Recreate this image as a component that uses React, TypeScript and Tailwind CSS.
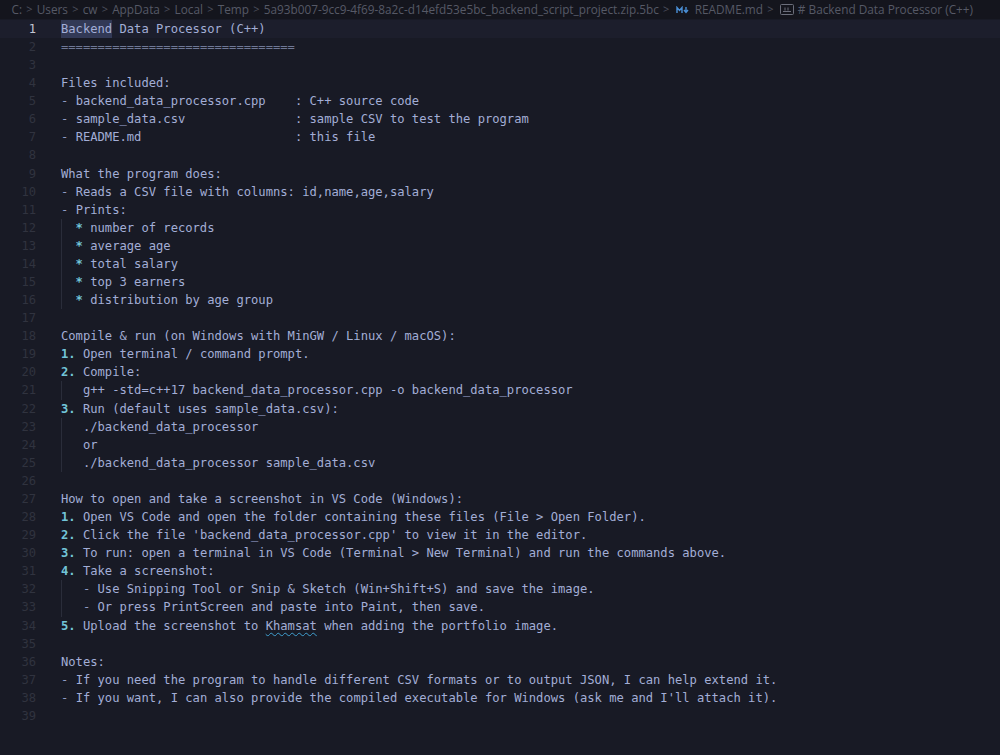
const BLUE = "text-[#a3aed6]";
const TEAL = "font-bold text-[#72c4d8]";
const DASH = "text-[#8f9bc4]";

type Seg = { t: string; c?: string };

const crumbs = ["C:", "Users", "cw", "AppData", "Local", "Temp", "5a93b007-9cc9-4f69-8a2c-d14efd53e5bc_backend_script_project.zip.5bc"];

function num(marker: string, text: string): Seg[] {
  return [{ t: marker, c: TEAL }, { t: " " + text }];
}
function dash(text: string): Seg[] {
  return [{ t: "- ", c: DASH }, { t: text }];
}
function star(text: string): Seg[] {
  return [{ t: "* ", c: TEAL }, { t: text }];
}

const lines: { segs?: Seg[]; guide?: number }[] = [
  { segs: [{ t: "Backend Data Processor (C++)" }] },
  { segs: [{ t: "================================", c: "text-[#6f7896]" }] },
  {},
  { segs: [{ t: "Files included:" }] },
  { segs: dash("backend_data_processor.cpp    : C++ source code") },
  { segs: dash("sample_data.csv               : sample CSV to test the program") },
  { segs: dash("README.md                     : this file") },
  {},
  { segs: [{ t: "What the program does:" }] },
  { segs: dash("Reads a CSV file with columns: id,name,age,salary") },
  { segs: dash("Prints:") },
  { guide: 2, segs: star("number of records") },
  { guide: 2, segs: star("average age") },
  { guide: 2, segs: star("total salary") },
  { guide: 2, segs: star("top 3 earners") },
  { guide: 2, segs: star("distribution by age group") },
  {},
  { segs: [{ t: "Compile & run (on Windows with MinGW / Linux / macOS):" }] },
  { segs: num("1.", "Open terminal / command prompt.") },
  { segs: num("2.", "Compile:") },
  { guide: 3, segs: [{ t: "g++ -std=c++17 backend_data_processor.cpp -o backend_data_processor" }] },
  { segs: num("3.", "Run (default uses sample_data.csv):") },
  { guide: 3, segs: [{ t: "./backend_data_processor" }] },
  { guide: 3, segs: [{ t: "or" }] },
  { guide: 3, segs: [{ t: "./backend_data_processor sample_data.csv" }] },
  {},
  { segs: [{ t: "How to open and take a screenshot in VS Code (Windows):" }] },
  { segs: num("1.", "Open VS Code and open the folder containing these files (File > Open Folder).") },
  { segs: num("2.", "Click the file 'backend_data_processor.cpp' to view it in the editor.") },
  { segs: num("3.", "To run: open a terminal in VS Code (Terminal > New Terminal) and run the commands above.") },
  { segs: num("4.", "Take a screenshot:") },
  { guide: 3, segs: dash("Use Snipping Tool or Snip & Sketch (Win+Shift+S) and save the image.") },
  { guide: 3, segs: dash("Or press PrintScreen and paste into Paint, then save.") },
  {
    segs: [
      { t: "5.", c: TEAL },
      { t: " Upload the screenshot to " },
      { t: "Khamsat", c: "underline decoration-wavy decoration-[#3f9fd0] decoration-1 underline-offset-2" },
      { t: " when adding the portfolio image." },
    ],
  },
  {},
  { segs: [{ t: "Notes:" }] },
  { segs: dash("If you need the program to handle different CSV formats or to output JSON, I can help extend it.") },
  { segs: dash("If you want, I can also provide the compiled executable for Windows (ask me and I'll attach it).") },
  {},
];

function Chevron() {
  return <span className="text-[11px] text-[#4d505e]">&gt;</span>;
}

function Breadcrumbs() {
  return (
    <div className="flex h-[19px] items-center gap-[4.2px] overflow-hidden bg-[#14151d] pl-[11.5px] font-['Open_Sans',sans-serif] text-[11.8px] whitespace-nowrap text-[#565966]">
      {crumbs.map((c) => (
        <span key={c} className="flex items-center gap-[4.2px]">
          <span>{c}</span>
          <Chevron />
        </span>
      ))}
      {/* markdown file icon */}
      <svg width="13" height="8" viewBox="0 0 13 8" className="mr-[2px] ml-[2px] text-[#4a8fd6]" fill="none" stroke="currentColor" strokeWidth="1.4">
        <path d="M1 7V1.5l2.5 3 2.5-3V7" />
        <path d="M10 1v4.5M8 4l2 2.5L12 4" />
      </svg>
      <span>README.md</span>
      <Chevron />
      <svg width="14" height="11" viewBox="0 0 14 11" fill="none" className="ml-[2px] text-[#6b6e7b]">
        <rect x="0.5" y="0.5" width="13" height="10" rx="1" stroke="currentColor" />
        <path d="M3 7.5h8M5 3.5v3M8 3.5v3" stroke="currentColor" />
      </svg>
      <span># Backend Data Processor (C++)</span>
    </div>
  );
}

function Line({ n, segs, guide }: { n: number; segs?: Seg[]; guide?: number }) {
  const active = n === 1;
  return (
    <div className={`flex h-[18.08px] items-center ${active ? "bg-[#1c1e2c]" : ""}`}>
      <div className={`w-[36px] text-right ${active ? "text-[#c3c6d4]" : "text-[#30333f]"}`}>{n}</div>
      <div className={`ml-[25px] whitespace-pre ${BLUE}`}>
        {active ? (
          <>
            <span className="inline-block bg-[#323956] leading-[18px]">Backend</span> Data Processor (C++)
          </>
        ) : (
          <>
            {guide ? (
              <span className="inline-block border-l border-[#2a2d3a]" style={{ width: `${guide}ch` }}>
                &nbsp;
              </span>
            ) : null}
            {segs?.map((s, i) => (
              <span key={i} className={s.c}>
                {s.t}
              </span>
            ))}
          </>
        )}
      </div>
    </div>
  );
}

export default function App() {
  return (
    <div className="h-[755px] w-[1000px] overflow-hidden bg-[#181a25]">
      <Breadcrumbs />
      <div className="pt-[1px] font-['DejaVu_Sans_Mono',monospace] text-[12.15px]">
        {lines.map((l, i) => (
          <Line key={i} n={i + 1} segs={l.segs} guide={l.guide} />
        ))}
      </div>
    </div>
  );
}
